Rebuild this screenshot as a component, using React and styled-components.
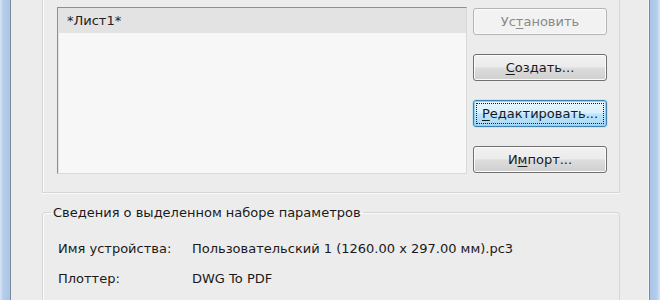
import React from 'react';
import styled, { createGlobalStyle } from 'styled-components';

const GlobalStyle = createGlobalStyle`
  html, body {
    margin: 0;
    padding: 0;
    background: #ececec;
    overflow: hidden;
  }
  body {
    font-family: "DejaVu Sans", "Liberation Sans", sans-serif;
    font-size: 13px;
    color: #1a1a1a;
  }
`;

const Window = styled.div`
  display: flex;
  width: 660px;
  height: 300px;
  overflow: hidden;
`;

const Frame = styled.div`
  width: 10px;
  flex-shrink: 0;
  background: ${(p) =>
    p.side === 'left'
      ? 'linear-gradient(90deg, #d6e5f5 0%, #b3cdea 35%, #a9c6e8 100%)'
      : 'linear-gradient(90deg, #a9c6e8 0%, #b3cdea 65%, #d6e5f5 100%)'};
  border-${(p) => (p.side === 'left' ? 'right' : 'left')}: 1px solid #7b8896;
  box-shadow: ${(p) =>
    p.side === 'left' ? '2px 0 0 #f9ebe2' : '-1px 0 0 #f6f6f6'};
`;

const Client = styled.div`
  flex: 1;
  display: flex;
  flex-direction: column;
  padding: 0 29px 0 31px;
  background: #ececec;
`;

const TopGroup = styled.div`
  display: flex;
  gap: 6px;
  padding: 7px 9px 18px 14px;
  border: 1px solid #d6d6d6;
  border-top: none;
  box-shadow: inset 1px 0 0 #fafafa, 0 1px 0 #fafafa;
`;

const List = styled.div`
  width: 408px;
  height: 165px;
  background: #f7f7f7;
  border: 1px solid;
  border-color: #8e8f8f #d9d9d9 #d9d9d9 #8e8f8f;
  box-shadow: inset 1px 1px 0 #e3e3e3;
`;

const ListItem = styled.div`
  height: 25px;
  display: flex;
  align-items: center;
  padding-left: 9px;
  background: ${(p) => (p.selected ? '#e3e3e3' : 'transparent')};
  font-size: 13px;
  color: #222;
`;

const Buttons = styled.div`
  display: flex;
  flex-direction: column;
  gap: 19px;
  padding-top: 1px;
`;

const Button = styled.button`
  width: 134px;
  height: 27px;
  padding: 0;
  font-family: "DejaVu Sans", "Liberation Sans", sans-serif;
  font-size: 13px;
  border-radius: 3px;
  color: ${(p) => (p.disabled ? '#8a8a8a' : '#1a1a1a')};
  border: 1px solid ${(p) => (p.disabled ? '#b4b4b4' : p.focused ? '#3c7fb1' : '#707070')};
  background: ${(p) =>
    p.disabled
      ? '#f2f2f2'
      : p.focused
      ? 'linear-gradient(180deg, #eaf6fd 0%, #d9f0fc 48%, #bee6fd 52%, #a7d9f5 100%)'
      : 'linear-gradient(180deg, #f2f2f2 0%, #ebebeb 48%, #dddddd 52%, #cfcfcf 100%)'};
  box-shadow: ${(p) =>
    p.focused
      ? '0 0 0 1px #c5e6f7, inset 0 0 0 1px #98d1ef'
      : p.disabled
      ? 'inset 0 0 0 1px #fafafa'
      : 'inset 0 0 0 1px #fbfbfb'};
  outline: ${(p) => (p.focused ? '1px dotted #1e1e1e' : 'none')};
  outline-offset: -4px;
`;

const Key = styled.span`
  text-decoration: underline;
  text-underline-offset: 2px;
`;

const Fieldset = styled.fieldset`
  margin: 12px 0 0 0;
  padding: 13px 14px 0 15px;
  border: 1px solid #d6d6d6;
  border-radius: 3px;
  box-shadow: inset 1px 1px 0 #fafafa;
  min-width: 0;
`;

const Legend = styled.legend`
  padding: 0 2px;
  margin-left: -7px;
  font-size: 13px;
  color: #1a1a1a;
`;

const Row = styled.div`
  display: grid;
  grid-template-columns: 134px 1fr;
  height: 30px;
  align-items: center;
  font-size: 13px;
  color: #1a1a1a;
`;

export default function App() {
  return (
    <>
      <GlobalStyle />
      <Window>
        <Frame side="left" />
        <Client>
          <TopGroup>
            <List>
              <ListItem selected>*Лист1*</ListItem>
            </List>
            <Buttons>
              <Button disabled>
                Ус<Key>т</Key>ановить
              </Button>
              <Button>
                <Key>С</Key>оздать...
              </Button>
              <Button focused>
                <Key>Р</Key>едактировать...
              </Button>
              <Button>
                И<Key>м</Key>порт...
              </Button>
            </Buttons>
          </TopGroup>
          <Fieldset>
            <Legend>Сведения о выделенном наборе параметров</Legend>
            <Row>
              <span>Имя устройства:</span>
              <span>Пользовательский 1 (1260.00 x 297.00 мм).pc3</span>
            </Row>
            <Row>
              <span>Плоттер:</span>
              <span>DWG To PDF</span>
            </Row>
            <Row>
              <span>Размер бумаги:</span>
              <span>Пользовательский (1260.00 x 297.00 мм)</span>
            </Row>
          </Fieldset>
        </Client>
        <Frame side="right" />
      </Window>
    </>
  );
}
